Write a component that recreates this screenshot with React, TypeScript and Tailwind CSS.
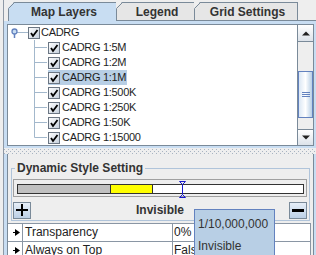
import React from "react";

const layers = [
  "CADRG 1:5M",
  "CADRG 1:2M",
  "CADRG 1:1M",
  "CADRG 1:500K",
  "CADRG 1:250K",
  "CADRG 1:50K",
  "CADRG 1:15000",
];

function Tab({ label, className, selected }: { label: string; className: string; selected?: boolean }) {
  return (
    <div
      className={`relative h-[19px] flex items-center justify-center font-bold text-[12px] text-[#333333] border-t border-[#7a8a99] ${
        selected ? "bg-[#c8ddf2]" : "bg-[#e6e6e6] border-b"
      } ${className}`}
    >
      {/* slanted left corner */}
      <svg width="7" height="19" className="absolute left-0 top-[-1px]">
        <polygon points="0,0 6,0 0,6" fill="#eeeeee" />
        <polyline points="0.5,19 0.5,6.5 6.5,0.5" fill="none" stroke="#7a8a99" />
      </svg>
      <span className="pl-[4px]">{label}</span>
    </div>
  );
}

function CheckBox() {
  return (
    <svg width="12" height="12" viewBox="0 0 12 12" className="shrink-0">
      <defs>
        <linearGradient id="cb" x1="0" y1="0" x2="1" y2="1">
          <stop offset="0" stopColor="#ffffff" />
          <stop offset="1" stopColor="#c4cfdc" />
        </linearGradient>
      </defs>
      <rect x="0.5" y="0.5" width="11" height="11" fill="url(#cb)" stroke="#6b7683" />
      <path d="M3 6 L5 9 L9.5 3" fill="none" stroke="#000000" strokeWidth="1.8" />
    </svg>
  );
}

function ArrowButton({ up }: { up?: boolean }) {
  return (
    <div
      className={`flex items-center justify-center bg-gradient-to-b from-[#ffffff] to-[#dde3ea] border-[#7a8a99] ${
        up ? "h-[17px] border-b" : "h-[16px] border-t"
      }`}
    >
      <svg width="8" height="5">
        {up ? <polygon points="0,4.5 8,4.5 4,0.5" fill="#222222" /> : <polygon points="0,0.5 8,0.5 4,4.5" fill="#222222" />}
      </svg>
    </div>
  );
}

function Tree() {
  return (
    <div className="flex-1 flex flex-col text-[11px] tracking-[-0.3px] text-[#1e1e1e]">
      <div className="h-[15px] flex items-center">
        <svg width="20" height="15" className="shrink-0">
          <line x1="9" y1="7.5" x2="20" y2="7.5" stroke="#a3b8cc" />
          <line x1="6.5" y1="9" x2="6.5" y2="13" stroke="#6382bf" strokeWidth="1.5" />
          <circle cx="6.5" cy="6.5" r="2.5" fill="#c8ddf2" stroke="#6382bf" strokeWidth="1.3" />
        </svg>
        <CheckBox />
        <span className="pl-[1px] leading-[15px]">CADRG</span>
      </div>
      {layers.map((name, i) => (
        <div key={name} className="h-[15px] flex items-center">
          <svg width="40" height="15" className="shrink-0">
            <line x1="26.5" y1="0" x2="26.5" y2={i === layers.length - 1 ? 7.5 : 15} stroke="#a3b8cc" />
            <line x1="26.5" y1="7.5" x2="39" y2="7.5" stroke="#a3b8cc" />
          </svg>
          <span className={`h-[15px] flex items-center pr-[1px] ${i === 2 ? "bg-[#b8cfe5]" : ""}`}>
            <CheckBox />
            <span className="pl-[2px] leading-[15px]">{name}</span>
          </span>
        </div>
      ))}
    </div>
  );
}

function ScrollBar() {
  return (
    <div className="w-[16px] flex flex-col border-l border-[#7a8a99] bg-[#eeeeee]">
      <ArrowButton up />
      <div className="flex-1 flex flex-col">
        <div className="h-[29px]" />
        <div className="h-[47px] border border-[#6382bf] bg-gradient-to-r from-[#dbe7f4] via-[#ffffff] to-[#b8cfe5] flex flex-col items-center justify-center gap-[1px]">
          <div className="w-[8px] h-[1px] bg-[#6382bf]" />
          <div className="w-[8px] h-[1px] bg-[#6382bf]" />
          <div className="w-[8px] h-[1px] bg-[#6382bf]" />
        </div>
      </div>
      <ArrowButton />
    </div>
  );
}

function SquareButton({ children }: { children: React.ReactNode }) {
  return (
    <div className="w-[18px] h-[17px] border border-[#7a8a99] bg-gradient-to-b from-[#e6eef7] to-[#bcd0e6] flex items-center justify-center">
      {children}
    </div>
  );
}

function Dots() {
  return (
    <svg width="312" height="6" className="block shrink-0">
      <defs>
        <pattern id="dots" width="4" height="4" patternUnits="userSpaceOnUse">
          <rect x="0" y="1" width="1" height="1" fill="#a9b4c2" />
          <rect x="2" y="3" width="1" height="1" fill="#a9b4c2" />
        </pattern>
      </defs>
      <rect x="0" y="0" width="312" height="6" fill="url(#dots)" />
    </svg>
  );
}

function Arrow() {
  return (
    <div className="w-[15px] border-r border-[#8a96a4] flex items-center justify-end pr-[1px]">
      <svg width="8" height="7">
        <line x1="0" y1="3.5" x2="2" y2="3.5" stroke="#000000" />
        <polygon points="2,0 7,3.5 2,7" fill="#000000" />
      </svg>
    </div>
  );
}

export default function App() {
  return (
    <div className="relative w-[316px] h-[255px] overflow-hidden bg-[#eeeeee] font-['Liberation_Sans',Arial,sans-serif] text-[12px] text-[#333333] pl-[3px]">
      <div className="h-full border-l border-[#8e99a6] flex flex-col">
        {/* Tabs */}
        <div className="shrink-0 flex h-[21px] items-end">
          <div className="w-[4px] h-full" />
          <Tab label="Map Layers" className="w-[108px]" selected />
          <Tab label="Legend" className="w-[78px]" />
          <Tab label="Grid Settings" className="w-[104px] border-r" />
          <div className="flex-1 h-full border-b border-[#7a8a99]" />
        </div>

        {/* Layer tree */}
        <div className="shrink-0 bg-[#c8ddf2] pt-[3px] pl-[3px] pr-[2px] pb-[2px]">
          <div className="h-[122px] border border-[#7a8a99] bg-white flex">
            <Tree />
            <ScrollBar />
          </div>
        </div>

        {/* Split divider */}
        <Dots />

        {/* Dynamic style panel */}
        <div className="flex-1 min-h-0 overflow-hidden bg-[#c8ddf2] pl-[3px] pr-[2px] flex">
          <div className="flex-1 border-l border-r border-[#7a8a99] bg-[#eeeeee] flex flex-col">
            <fieldset className="shrink-0 mt-[7px] ml-[3px] mr-[3px] border border-[#b0c4da] pl-[1px] pr-[2px] pb-[1px]">
              <legend className="ml-[2px] px-[2px] font-bold text-[12px] leading-[14px] text-[#333333]">
                Dynamic Style Setting
              </legend>
              <div className="relative mt-[4px] h-[18px] border border-[#a0a0a0] bg-[#eeeeee] pl-[3px] pt-[4px] pr-[2px]">
                <div className="h-[10px] border border-[#333333] flex">
                  <div className="w-[93px] bg-[#c0c0c0] border-r border-[#333333]" />
                  <div className="w-[42px] bg-[#ffff00] border-r border-[#333333]" />
                  <div className="flex-1 bg-white" />
                </div>
                <svg width="7" height="17" className="absolute left-[165px] top-[1px]">
                  <polyline points="0.5,0.5 6.5,0.5 3.5,3.5 0.5,0.5" fill="none" stroke="#1a1acc" />
                  <line x1="3.5" y1="3.5" x2="3.5" y2="13.5" stroke="#1a1acc" />
                  <polyline points="3.5,13.5 0.5,16.5 6.5,16.5 3.5,13.5" fill="none" stroke="#1a1acc" />
                </svg>
              </div>
              <div className="mt-[4px] flex items-center">
                <SquareButton>
                  <svg width="12" height="12">
                    <rect x="5" y="0" width="2" height="12" fill="#000000" />
                    <rect x="0" y="5" width="12" height="2" fill="#000000" />
                  </svg>
                </SquareButton>
                <div className="flex-1 text-center font-bold text-[12px] text-[#333333]">Invisible</div>
                <SquareButton>
                  <svg width="12" height="3">
                    <rect x="0" y="0" width="12" height="3" fill="#000000" />
                  </svg>
                </SquareButton>
              </div>
            </fieldset>

            {/* property table */}
            <div className="shrink-0 mt-[2px] mr-[2px] border-t border-r border-[#8a96a4] bg-white text-[12px] text-[#222222]">
              <div className="h-[18px] flex border-b border-[#8a96a4]">
                <Arrow />
                <div className="w-[150px] border-r border-[#8a96a4] pl-[2px] leading-[17px]">Transparency</div>
                <div className="flex-1 pl-[1px] leading-[17px]">0%</div>
              </div>
              <div className="h-[18px] flex border-b border-[#8a96a4]">
                <Arrow />
                <div className="w-[150px] border-r border-[#8a96a4] pl-[2px] leading-[17px]">Always on Top</div>
                <div className="flex-1 pl-[1px] leading-[17px]">False</div>
              </div>
            </div>
          </div>
        </div>
      </div>

      {/* Tooltip */}
      <div className="absolute left-[194px] top-[209px] w-[81px] h-[50px] bg-[#b8cfe5] border border-[#6382bf] px-[3px] pt-[3px] text-[12px] text-[#333333] leading-[22px]">
        <div>1/10,000,000</div>
        <div>Invisible</div>
      </div>
    </div>
  );
}
